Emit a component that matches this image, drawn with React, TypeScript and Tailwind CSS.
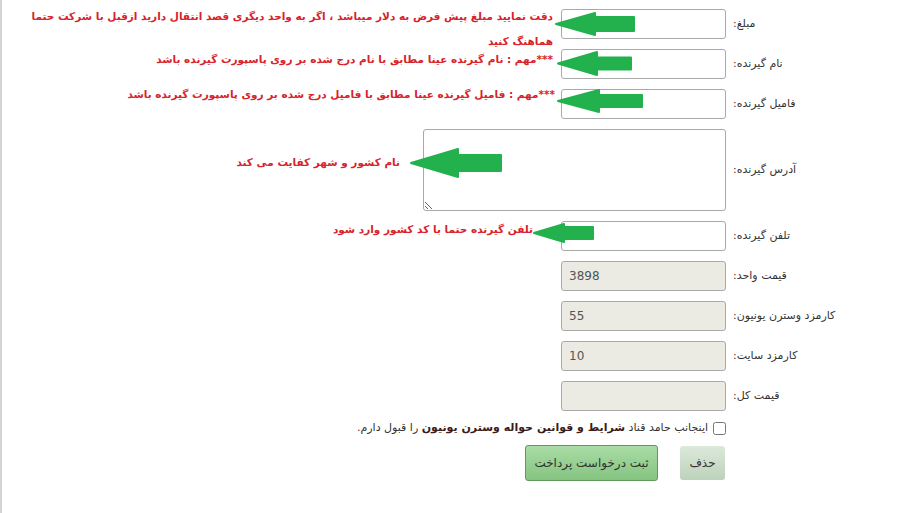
import React from "react"

type Arrow = { tip: number; y: number; base: number; head: number; end: number; shaft: number }

const arrows: Arrow[] = [
  { tip: 554, y: 24, base: 593, head: 11, end: 632, shaft: 7 },
  { tip: 556, y: 63.5, base: 595, head: 11.5, end: 629, shaft: 6 },
  { tip: 556, y: 101, base: 597, head: 11, end: 640, shaft: 6 },
  { tip: 409, y: 163, base: 456, head: 14, end: 499, shaft: 8 },
  { tip: 532, y: 233, base: 562, head: 9, end: 591, shaft: 6 },
]

function arrowPoints(a: Arrow) {
  return [
    [a.tip, a.y],
    [a.base, a.y - a.head],
    [a.base, a.y - a.shaft],
    [a.end, a.y - a.shaft],
    [a.end, a.y + a.shaft],
    [a.base, a.y + a.shaft],
    [a.base, a.y + a.head],
  ]
    .map((p) => p.join(","))
    .join(" ")
}

const help = "whitespace-nowrap text-[10.5px] font-bold leading-[25px] text-[#d8232a] self-start"

function Row({
  label,
  children,
  tall,
}: {
  label: string
  children: React.ReactNode
  tall?: boolean
}) {
  return (
    <div className={`flex items-center ${tall ? "h-[82px]" : "h-[30px]"}`}>
      <label className="w-[168px] shrink-0 pt-[1px] text-left text-[11px] text-[#333]">{label}</label>
      {children}
    </div>
  )
}

const field = "h-[30px] w-[165px] shrink-0 rounded-[3px] border border-[#a9a9a9] px-[7px] text-[12px] text-[#555] outline-none"
const locked = `${field} bg-[#ebebe4]`

export default function App() {
  return (
    <div
      className="relative min-h-[513px] w-[901px] border-l-2 border-[#d4d4d4] bg-white"
      style={{ fontFamily: '"DejaVu Sans", Tahoma, sans-serif' }}
    >
      <form dir="rtl" className="flex flex-col gap-[10px] pt-[9px]">
        <Row label="مبلغ:">
          <input dir="ltr" className={`${field} mr-[7px] bg-white`} />
          <div className={`${help} mr-[8px] mt-[-5px]`}>
            دقت نمایید مبلغ پیش فرض به دلار میباشد ، اگر به واحد دیگری قصد انتقال دارید ازقبل با شرکت حتما
            <br />
            هماهنگ کنید
          </div>
        </Row>
        <Row label="نام گیرنده:">
          <input dir="ltr" className={`${field} mr-[7px] bg-white`} />
          <div className={`${help} mr-[8px] mt-[-2px]`}>***مهم : نام گیرنده عینا مطابق با نام درج شده بر روی پاسپورت گیرنده باشد</div>
        </Row>
        <Row label="فامیل گیرنده:">
          <input dir="ltr" className={`${field} mr-[7px] bg-white`} />
          <div className={`${help} mr-[6px] mt-[-7px]`}>***مهم : فامیل گیرنده عینا مطابق با فامیل درج شده بر روی پاسپورت گیرنده باشد</div>
        </Row>
        <Row label="آدرس گیرنده:" tall>
          <textarea className="mr-[7px] h-[82px] w-[303px] shrink-0 resize-y rounded-[3px] border border-[#a9a9a9] bg-white outline-none" />
          <div className={`${help} mr-[23px] mt-[21px]`}>نام کشور و شهر کفایت می کند</div>
        </Row>
        <Row label="تلفن گیرنده:">
          <input dir="ltr" className={`${field} mr-[7px] bg-white`} />
          <div className={`${help} mr-[28px] mt-[-4px]`}>تلفن گیرنده حتما با کد کشور وارد شود</div>
        </Row>
        <Row label="قیمت واحد:">
          <input dir="ltr" disabled defaultValue="3898" className={`${locked} mr-[7px]`} />
        </Row>
        <Row label="کارمزد وسترن یونیون:">
          <input dir="ltr" disabled defaultValue="55" className={`${locked} mr-[7px]`} />
        </Row>
        <Row label="کارمزد سایت:">
          <input dir="ltr" disabled defaultValue="10" className={`${locked} mr-[7px]`} />
        </Row>
        <Row label="قیمت کل:">
          <input dir="ltr" disabled className={`${locked} mr-[7px]`} />
        </Row>

        <div className="flex h-[14px] items-center gap-[5px] pr-[175px] text-[11px] text-[#333]">
          <input type="checkbox" className="m-0 h-[13px] w-[13px]" />
          <span>
            اینجانب حامد قناد <b className="text-[#3a1c1c]">شرایط و قوانین حواله وسترن یونیون</b> را قبول دارم.
          </span>
        </div>

        <div className="flex items-center gap-[22px] pr-[176px]">
          <button
            type="button"
            className="h-[34px] w-[45px] rounded-[3px] bg-gradient-to-b from-[#dde9db] to-[#bcd2ba] text-[12px] text-[#333]"
          >
            حذف
          </button>
          <button
            type="button"
            className="h-[36px] w-[133px] rounded-[3px] border border-[#5e9a5a] bg-gradient-to-b from-[#a9dca5] to-[#85c480] text-[12px] text-[#333]"
          >
            ثبت درخواست پرداخت
          </button>
        </div>
      </form>

      <svg className="pointer-events-none absolute left-0 top-0" width="901" height="513">
        {arrows.map((a, i) => (
          <polygon
            key={i}
            points={arrowPoints(a)}
            fill="#22b14c"
            stroke="#22b14c"
            strokeWidth="2"
            strokeLinejoin="round"
          />
        ))}
      </svg>
    </div>
  )
}
